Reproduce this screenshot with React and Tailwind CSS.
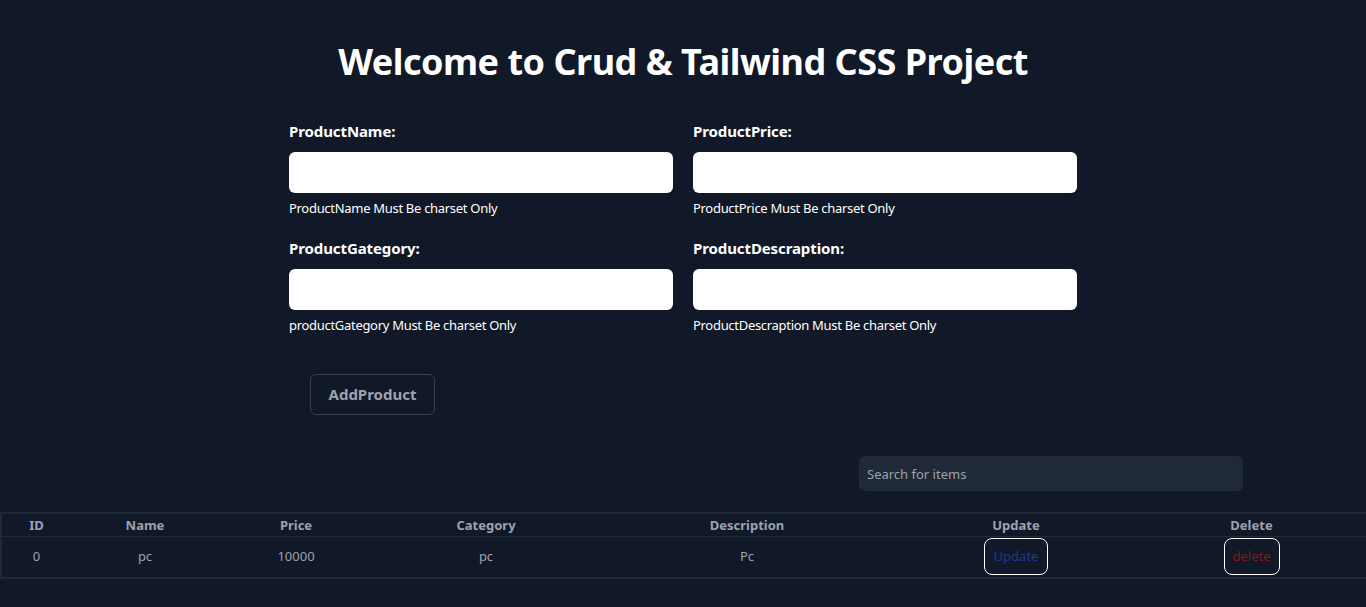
import React from 'react';

const fields = [
  { label: 'ProductName:', hint: 'ProductName Must Be charset Only' },
  { label: 'ProductPrice:', hint: 'ProductPrice Must Be charset Only' },
  { label: 'ProductGategory:', hint: 'productGategory Must Be charset Only' },
  { label: 'ProductDescraption:', hint: 'ProductDescraption Must Be charset Only' },
];

const products = [{ id: 0, name: 'pc', price: 10000, category: 'pc', description: 'Pc' }];

const App = () => {
  return (
    <div className="min-h-screen bg-[#111827] text-white font-['Noto_Sans',sans-serif]">
      <h1 className="pt-[38px] text-center text-[36px] font-bold leading-[48px] tracking-[-0.5px]">
        Welcome to Crud &amp; Tailwind CSS Project
      </h1>

      {/* Form */}
      <form className="mx-auto mt-[35px] w-[788px]" onSubmit={(e) => e.preventDefault()}>
        <div className="grid grid-cols-2 gap-x-5 gap-y-[21px]">
          {fields.map((f) => (
            <div key={f.label}>
              <label className="block text-[15px] font-bold leading-[20px] tracking-[-0.1px]">{f.label}</label>
              <input type="text" className="mt-[11px] block h-[41px] w-full rounded-md bg-white text-black px-3" />
              <p className="mt-[6px] text-[13px] leading-[18px] tracking-[-0.3px]">{f.hint}</p>
            </div>
          ))}
        </div>
        <button
          type="submit"
          className="ml-[21px] mt-[40px] h-[41px] w-[125px] rounded-md border border-[#374151] text-[15px] font-bold text-[#9ca3af]"
        >
          AddProduct
        </button>
      </form>

      {/* Search */}
      <div className="mt-[41px] flex justify-end pr-[123px]">
        <input
          type="text"
          placeholder="Search for items"
          className="h-[35px] w-[384px] rounded-md bg-[#1f2937] px-2 text-[13px] text-white placeholder:text-[#9ca3af] outline-none"
        />
      </div>

      {/* Table */}
      <table className="mt-[21px] w-full table-fixed border-2 border-[#1f2937] text-[13px] text-[#9ca3af]">
        <colgroup>
          <col className="w-[70px]" />
          <col className="w-[148px]" />
          <col className="w-[154px]" />
          <col className="w-[226px]" />
          <col className="w-[296px]" />
          <col className="w-[242px]" />
          <col className="w-[230px]" />
        </colgroup>
        <thead>
          <tr className="border-b border-[#1f2937]">
            {['ID', 'Name', 'Price', 'Category', 'Description', 'Update', 'Delete'].map((h) => (
              <th key={h} className="h-[23px] text-center font-bold leading-[18px]">{h}</th>
            ))}
          </tr>
        </thead>
        <tbody>
          {products.map((p) => (
            <tr key={p.id}>
              <td className="h-[42px] text-center">{p.id}</td>
              <td className="text-center">{p.name}</td>
              <td className="text-center">{p.price}</td>
              <td className="text-center">{p.category}</td>
              <td className="text-center">{p.description}</td>
              <td className="text-center">
                <button className="h-[37px] w-[64px] rounded-lg border border-white text-[#1e3a8a]">Update</button>
              </td>
              <td className="text-center">
                <button className="h-[37px] w-[56px] rounded-lg border border-white text-[#7f1d1d]">delete</button>
              </td>
            </tr>
          ))}
        </tbody>
      </table>
    </div>
  );
};

export default App;
